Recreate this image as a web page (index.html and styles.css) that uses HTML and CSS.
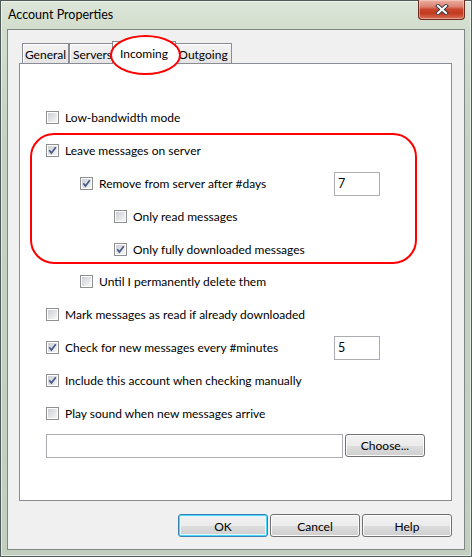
FILE: index.html
```html
<!DOCTYPE html>
<html>
<head>
<meta charset="utf-8">
<link rel="stylesheet" href="styles.css">
</head>
<body>
<div class="window">
  <div class="titlebar">
    <span class="title">Account Properties</span>
    <div class="close">
      <svg width="14" height="11" viewBox="0 0 14 11"><path d="M3 2 L11 9 M11 2 L3 9" stroke="#3b3f46" stroke-width="4" stroke-linecap="square" fill="none"/><path d="M3 2 L11 9 M11 2 L3 9" stroke="#ffffff" stroke-width="2" stroke-linecap="square" fill="none"/></svg>
    </div>
  </div>
  <div class="client">
    <div class="tabs">
      <div class="tab t-general">General</div>
      <div class="tab t-servers">Servers</div>
      <div class="tab sel">Incoming</div>
      <div class="tab t-outgoing">Outgoing</div>
    </div>
    <div class="panel">
      <div class="opts">
        <div class="row"><span class="cb"></span><span class="lbl">Low-bandwidth mode</span></div>
        <div class="row"><span class="cb"><svg class="mk" viewBox="0 0 9 9"><path d="M1.3 4.3 L3.4 7 L7.8 1.3"/></svg></span><span class="lbl">Leave messages on server</span></div>
        <div class="row l1"><span class="cb"><svg class="mk" viewBox="0 0 9 9"><path d="M1.3 4.3 L3.4 7 L7.8 1.3"/></svg></span><span class="lbl">Remove from server after #days</span><input class="field" type="text" value="7" readonly></div>
        <div class="row l2"><span class="cb"></span><span class="lbl">Only read messages</span></div>
        <div class="row l2"><span class="cb"><svg class="mk" viewBox="0 0 9 9"><path d="M1.3 4.3 L3.4 7 L7.8 1.3"/></svg></span><span class="lbl">Only fully downloaded messages</span></div>
        <div class="row l1"><span class="cb"></span><span class="lbl">Until I permanently delete them</span></div>
        <div class="row"><span class="cb"></span><span class="lbl">Mark messages as read if already downloaded</span></div>
        <div class="row"><span class="cb"><svg class="mk" viewBox="0 0 9 9"><path d="M1.3 4.3 L3.4 7 L7.8 1.3"/></svg></span><span class="lbl">Check for new messages every #minutes</span><input class="field" type="text" value="5" readonly></div>
        <div class="row"><span class="cb"><svg class="mk" viewBox="0 0 9 9"><path d="M1.3 4.3 L3.4 7 L7.8 1.3"/></svg></span><span class="lbl">Include this account when checking manually</span></div>
        <div class="row"><span class="cb"></span><span class="lbl">Play sound when new messages arrive</span></div>
      </div>
      <div class="filerow">
        <input class="filefield" type="text" value="" readonly>
        <button class="btn choose">Choose...</button>
      </div>
    </div>
    <div class="buttons">
      <button class="btn dlg default">OK</button>
      <button class="btn dlg">Cancel</button>
      <button class="btn dlg">Help</button>
    </div>
  </div>
  <div class="ring-box"></div>
</div>
</body>
</html>
```

FILE: styles.css
```css
* { box-sizing: border-box; }
html, body { margin: 0; padding: 0; }
body {
  width: 472px;
  height: 557px;
  overflow: hidden;
  font-family: "Lato", "Open Sans", sans-serif;
  font-size: 12px;
  color: #000;
  background: #c5d0c0;
}

.window {
  position: relative;
  width: 472px;
  height: 557px;
  display: flex;
  flex-direction: column;
  padding: 0 6px 6px;
  border: 1px solid #4f5b58;
  background: linear-gradient(180deg, #dde6d9 0px, #d2ddcd 28px, #c6d2c1 140px, #c3cfbe 100%);
  box-shadow: inset 0 0 0 1px rgba(255,255,255,0.55);
}

.titlebar {
  height: 28px;
  flex: none;
  display: flex;
  align-items: center;
  padding-left: 1px;
}
.title { font-size: 12.5px; line-height: 1; }

.close {
  margin-left: auto;
  align-self: flex-start;
  margin-top: -1px;
  width: 47px;
  height: 20px;
  border: 1px solid #6a2b20;
  border-top: none;
  border-radius: 0 0 4px 4px;
  background: linear-gradient(180deg, #eab0a3 0%, #dc8271 35%, #c8452c 50%, #c23a1f 70%, #d9735b 100%);
  box-shadow: inset 0 0 0 1px rgba(255,220,210,0.45);
  display: flex;
  align-items: center;
  justify-content: center;
}

.client {
  flex: 1;
  border: 1px solid #7d8885;
  background: #f0f0f0;
  display: flex;
  flex-direction: column;
  padding: 11px 12px 0 11px;
}

.tabs {
  flex: none;
  height: 22px;
  display: flex;
  align-items: flex-end;
  padding-left: 3px;
}
.tab {
  height: 20px;
  border: 1px solid #898c95;
  border-bottom: none;
  background: linear-gradient(180deg, #f4f4f4, #e4e4e4);
  box-shadow: inset 1px 1px 0 #ffffff;
  text-align: center;
  line-height: 21px;
  white-space: nowrap;
  overflow: hidden;
}
.t-general { width: 47px; }
.t-servers { width: 45px; text-align: left; padding-left: 3px; }
.t-outgoing { width: 58px; }
.tab.sel {
  position: relative;
  z-index: 3;
  width: 64px;
  height: 23px;
  margin: 0 -2px -1px;
  background: #fff;
  box-shadow: none;
  line-height: 23px;
  overflow: visible;
}
.tab.sel::before {
  content: "";
  position: absolute;
  z-index: -1;
  left: -3px;
  top: -7px;
  width: 67px;
  height: 36px;
  border: 2px solid #ff0000;
  border-radius: 50%;
  background: #fff;
}

.panel {
  flex: none;
  height: 438px;
  border: 1px solid #898c95;
  background: #fff;
  padding: 37.6px 0 0 26px;
}

.opts { width: 334px; }
.row {
  height: 32.8px;
  display: flex;
  align-items: center;
}
.row.l1 { padding-left: 34px; }
.row.l2 { padding-left: 68px; }

.cb {
  flex: none;
  width: 13px;
  height: 13px;
  margin-right: 6px;
  border: 1px solid #8e8f8f;
  padding: 1px;
  background: linear-gradient(135deg, #ccd0d5, #f6f6f6) content-box, #f8f8f8;
  box-shadow: inset 0 0 0 1px #ffffff;
}
.mk {
  display: block;
  width: 9px;
  height: 9px;
  fill: none;
  stroke: #46598a;
  stroke-width: 1.7;
}
.lbl { white-space: nowrap; }

.field {
  margin-left: auto;
  width: 46px;
  height: 24px;
  border: 1px solid #abadb3;
  padding: 0 3px;
  font: inherit;
  font-size: 12.5px;
  color: #000;
  background: #fff;
  outline: none;
}

.filerow {
  margin-top: 4.4px;
  display: flex;
  align-items: center;
}
.filefield {
  width: 297px;
  height: 24px;
  border: 1px solid #abadb3;
  padding: 0 3px;
  font: inherit;
  background: #fff;
  outline: none;
}

.btn {
  font: inherit;
  color: #000;
  border: 1px solid #707070;
  border-radius: 3px;
  background: linear-gradient(180deg, #f2f2f2 0%, #ebebeb 50%, #dddddd 51%, #cfcfcf 100%);
  box-shadow: inset 0 0 0 1px #fcfcfc;
  padding: 0;
  text-align: center;
}
.choose {
  margin-left: 2px;
  width: 80px;
  height: 23px;
}

.buttons {
  flex: none;
  margin-top: 13px;
  display: flex;
  justify-content: flex-end;
  gap: 2px;
}
.dlg {
  width: 90px;
  height: 23px;
  padding-top: 1px;
}
.dlg.default {
  border-color: #3c7fb1;
  box-shadow: inset 0 0 0 1px #48d8fb, inset 0 0 0 2px #e6f6fd;
}

.ring-box {
  position: absolute;
  left: 29px;
  top: 132px;
  width: 387px;
  height: 131px;
  border: 2px solid #ff0000;
  border-radius: 24px;
  pointer-events: none;
}
```
